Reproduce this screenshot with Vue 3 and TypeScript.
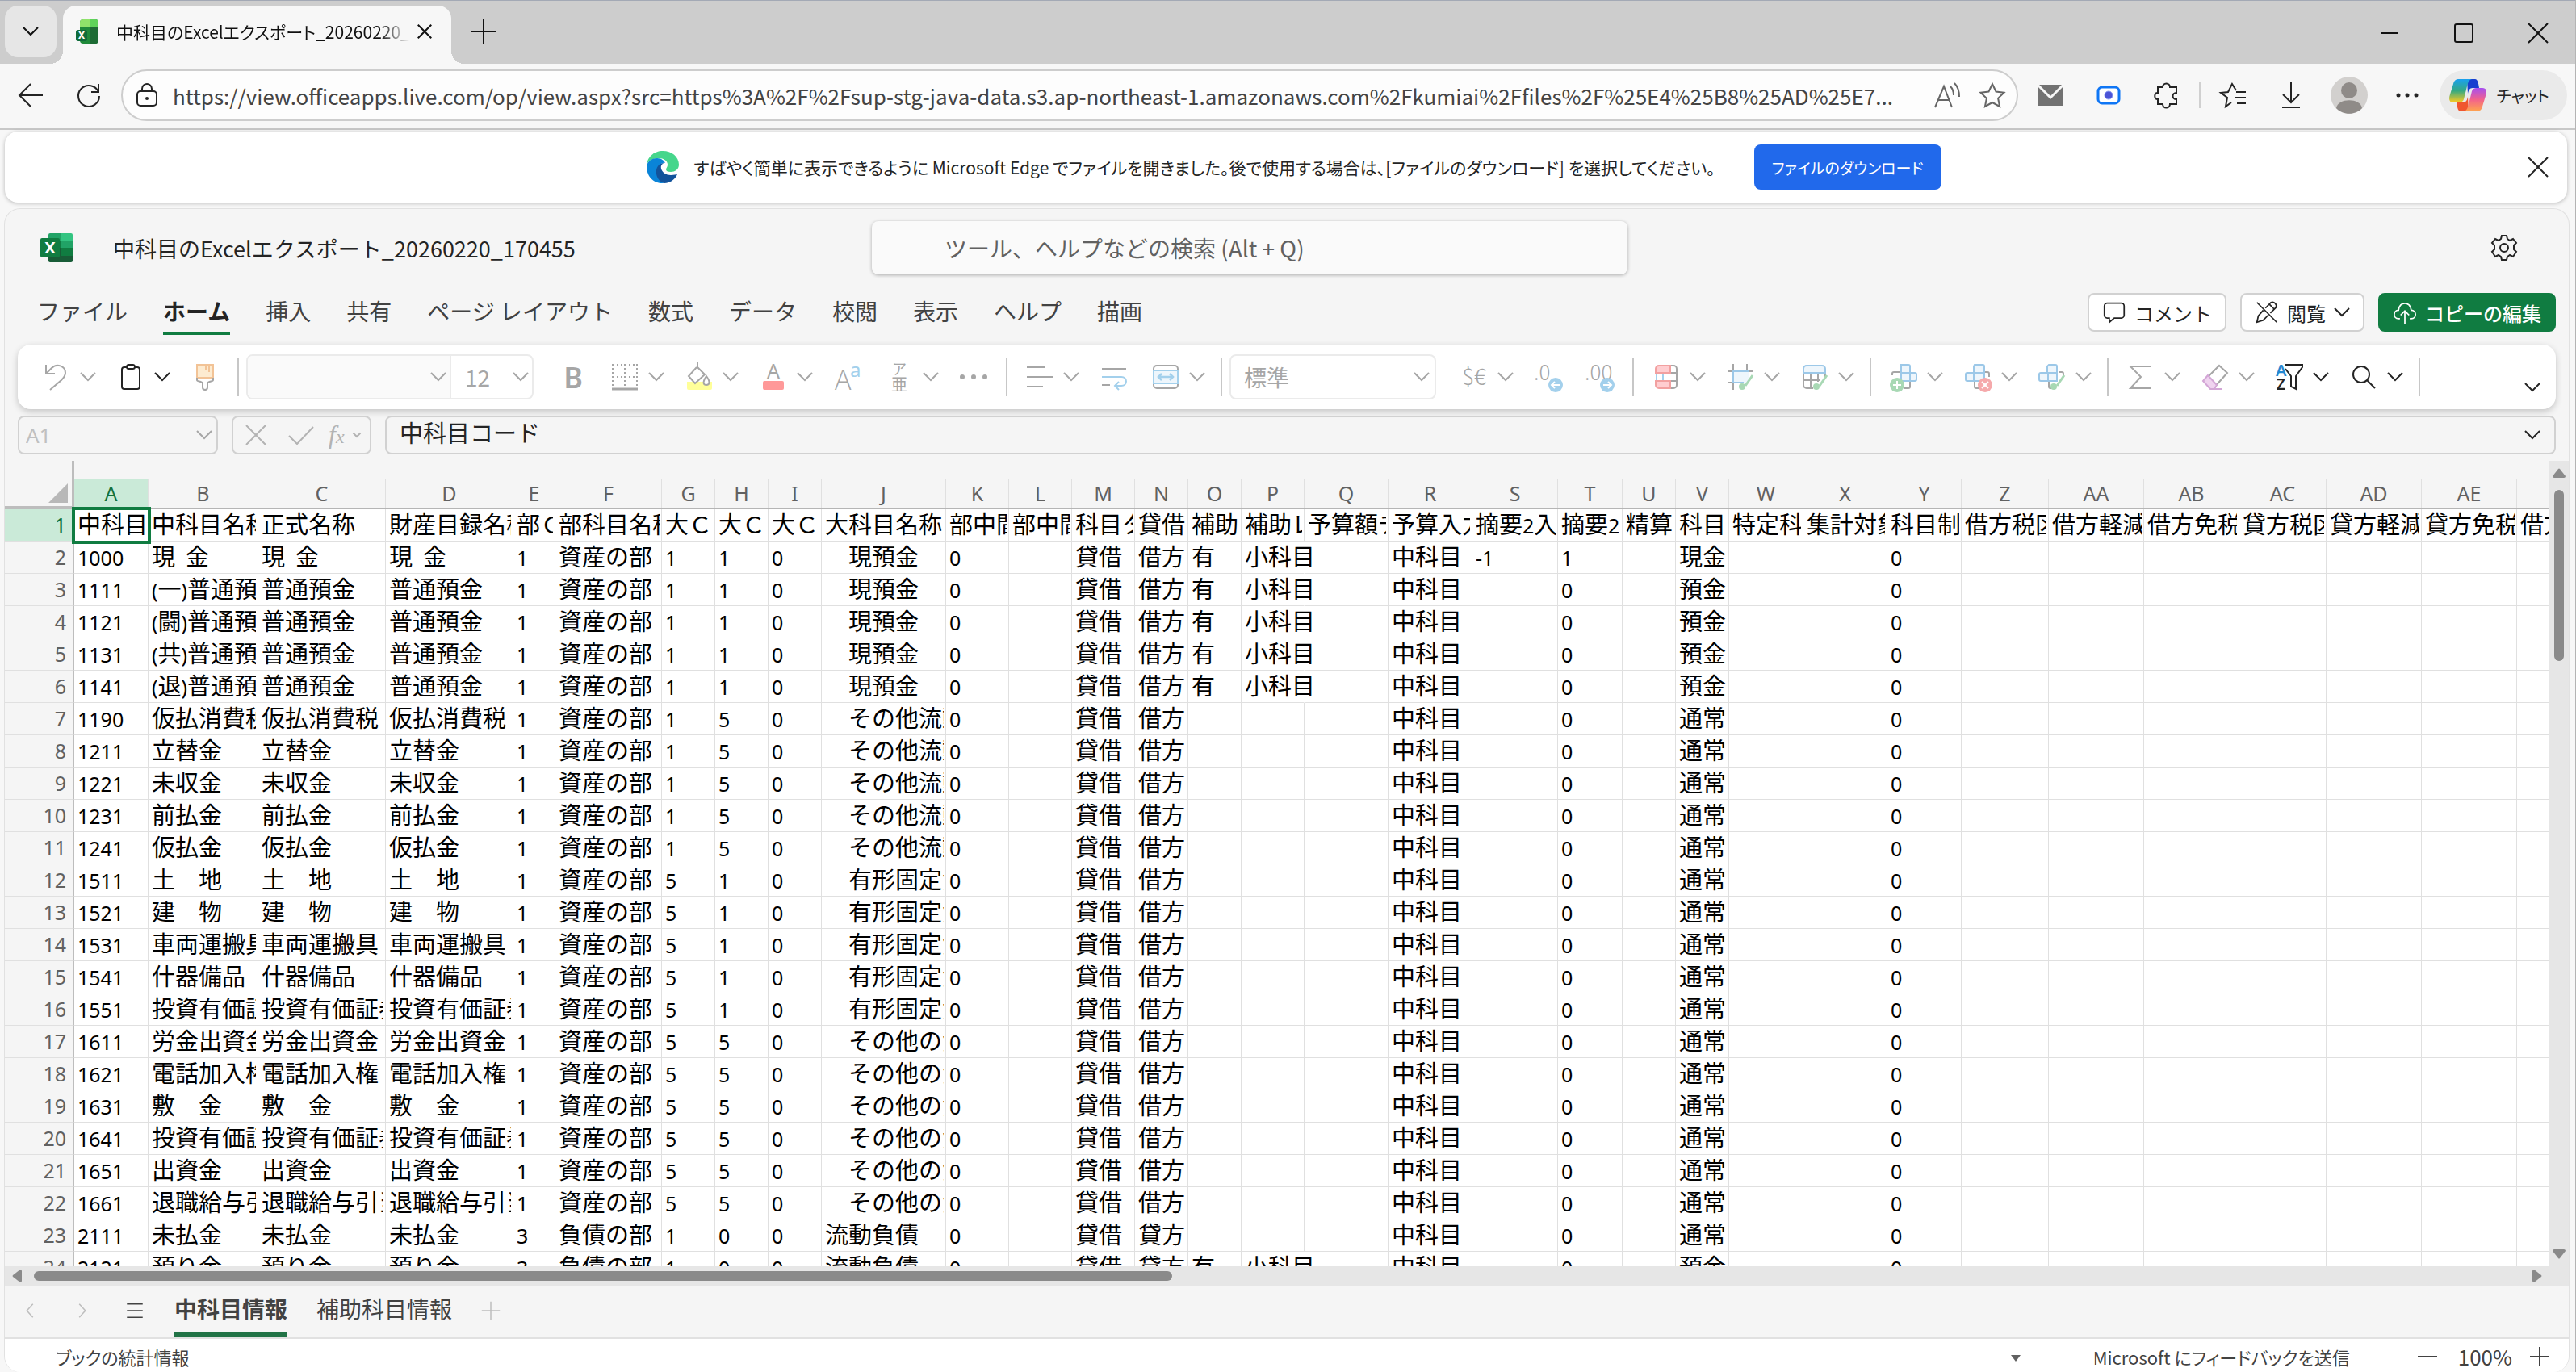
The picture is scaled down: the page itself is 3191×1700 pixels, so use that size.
<script setup lang="ts">
interface Tool {
  kind: 'plain' | 'split' | 'sep' | 'font' | 'format'
  icon?: string
  label?: string
  active?: boolean
}

// Glyphs on a 32 x 32 grid, stroked with the colour of the button they sit in.
const icons: Record<string, string> = {
  undo: '<path d="M3 1v11h11M3 12L10 5C16-1 27 2 27 11c0 4-2 6-5 9L8 32"/>',
  paste: '<path d="M11 4H8a3 3 0 0 0-3 3v21a3 3 0 0 0 3 3h16a3 3 0 0 0 3-3V7a3 3 0 0 0-3-3h-3"/><rect x="11" y="1" width="10" height="5" rx="2.5"/>',
  brush: '<path fill="#fdebd0" stroke="#f2c396" d="M6 1h20v16H6zM17 1v6M21 1v9"/><path d="M6 17v3c0 2 6 1 7 4v5a3 3 0 0 0 6 0v-5c1-3 7-2 7-4v-3"/>',
  border: '<path stroke-dasharray="2 3" d="M1 1h30M1 16h30M1 0v28M16 0v28M31 0v28"/><path stroke-width="3" d="M0 31h32"/>',
  fill: '<path fill="#ffff99" stroke="none" d="M1 22h31v8a2 2 0 0 1-2 2H3a2 2 0 0 1-2-2z"/><path fill="#fff" d="M13 4L3 15l8 9 12-11-9-9V-2M25 15c-6 9-3 11 0 11s6-3 0-11z"/>',
  fontColor: '<text x="16" y="18" font-size="25" text-anchor="middle" font-family="Noto Sans" fill="currentColor" stroke="none">A</text><rect x="3" y="21" width="26" height="11" rx="2" fill="#ff9999" stroke="none"/>',
  fontSize: '<text x="0" y="32" font-size="34" font-family="Open Sans" font-weight="300" fill="currentColor" stroke="none">A</text><text x="19" y="16" font-size="24" font-family="Noto Sans" fill="#a3d0ec" stroke="none">a</text>',
  phonetic: '<text x="16" y="13" font-size="18" text-anchor="middle" font-family="Noto Sans CJK JP" fill="currentColor" stroke="none">ア</text><text x="16" y="33" font-size="20" text-anchor="middle" font-family="Noto Sans CJK JP" fill="currentColor" stroke="none">亜</text>',
  more: '<g fill="currentColor" stroke="none"><circle cx="2" cy="16" r="3"/><circle cx="16" cy="16" r="3"/><circle cx="30" cy="16" r="3"/></g>',
  align: '<path d="M0 4h23M0 16h32M0 28h20"/>',
  wrap: '<path d="M1 6h30M1 26h10"/><path stroke="#a3d0ec" d="M1 16h24c8 0 8 11 0 11h-8M22 22l-5 5 5 5"/>',
  merge: '<rect x="1" y="2" width="30" height="28" rx="4"/><path fill="#eef6fc" stroke="#a3d0ec" d="M1 8h30v16H1z"/><path stroke="#a3d0ec" stroke-width="2.5" d="M7 16h18M11 12l-4 4 4 4M21 12l4 4-4 4"/>',
  currency: '<text x="16" y="26" font-size="28" text-anchor="middle" font-family="Noto Sans CJK JP" font-weight="300" fill="currentColor" stroke="none">$€</text>',
  decLess: '<text x="-2" y="20" font-size="26" font-family="Noto Sans CJK JP" font-weight="300" fill="currentColor" stroke="none">.0</text><circle cx="25" cy="26" r="9" fill="#a3d0ec" stroke="none"/><path stroke="#fff" d="M30 26H20M24 22l-4 4 4 4"/>',
  decMore: '<text x="-3" y="20" font-size="26" font-family="Noto Sans CJK JP" font-weight="300" fill="currentColor" stroke="none">.00</text><circle cx="25" cy="26" r="9" fill="#a3d0ec" stroke="none"/><path stroke="#fff" d="M20 26h10M26 22l4 4-4 4"/>',
  condition: '<path d="M20 2h5a4 4 0 0 1 4 4v20a4 4 0 0 1-4 4h-5M21 11h8M21 21h8"/><path fill="#ffcdd0" stroke="#f2a0a0" d="M21 2H7a4 4 0 0 0-4 4v5h18zM21 30H7a4 4 0 0 1-4-4v-5h18z"/><path stroke="#a3d0ec" d="M4 12v8M12 12v8"/>',
  formatTable: '<path fill="#eef6fc" stroke="none" d="M6 9h20v14H6z"/><path stroke="#9cc8e8" d="M7 9v14M0 9h32M6 23h14"/><path d="M7 0v8M24 0v8M7 24v8M0 9h6M26 9h6M0 23h6"/><path stroke="#a8d8b4" stroke-width="3" d="M31 14l-9 13"/><circle cx="18" cy="28" r="4" fill="#a8d8b4" stroke="none"/>',
  cellStyle: '<path d="M2 11v15a4 4 0 0 0 4 4h8M2 20h20M11 11v19M20 11v11M29 11v5"/><path fill="#eef6fc" stroke="#9cc8e8" d="M6 2h19a4 4 0 0 1 4 4v5H2V6a4 4 0 0 1 4-4z"/><path stroke="#a8d8b4" stroke-width="3" d="M31 14l-9 13"/><circle cx="18" cy="28" r="4" fill="#a8d8b4" stroke="none"/>',
  insert: '<path d="M2 14v-2a2 2 0 0 1 2-2h8M24 22v6a2 2 0 0 1-2 2h-5"/><path fill="#eef6fc" stroke="#9cc8e8" d="M13 1h9a2 2 0 0 1 2 2v8h6a2 2 0 0 1 2 2v6a2 2 0 0 1-2 2h-6H13V11z"/><path stroke="#9cc8e8" d="M13 11h11v10"/><circle cx="8" cy="26" r="9" fill="#a8d8b4" stroke="none"/><path stroke="#fff" d="M8 21v10M3 26h10"/>',
  remove: '<path d="M24 10h4a2 2 0 0 1 2 2v4M12 22v6a2 2 0 0 0 2 2h3"/><path fill="#eef6fc" stroke="#9cc8e8" d="M12 1h10a2 2 0 0 1 2 2v18H3a2 2 0 0 1-2-2v-6a2 2 0 0 1 2-2h8V3z"/><path stroke="#9cc8e8" d="M11 11v10M11 11h13"/><circle cx="25" cy="26" r="9" fill="#f5a9ab" stroke="none"/><path stroke="#fff" d="M21 22l8 8M29 22l-8 8"/>',
  format: '<path d="M24 10h4a2 2 0 0 1 2 2v2M12 22v6a2 2 0 0 0 2 2h2"/><path fill="#eef6fc" stroke="#9cc8e8" d="M12 1h8a2 2 0 0 1 2 2v18H2a2 2 0 0 1-2-2v-6a2 2 0 0 1 2-2h8V3z"/><path stroke="#9cc8e8" d="M11 11v10M11 11h11"/><path stroke="#a8d8b4" stroke-width="3" d="M31 14l-9 13"/><circle cx="18" cy="28" r="4" fill="#a8d8b4" stroke="none"/>',
  sum: '<path d="M29 3H3l13 13L3 30h26"/>',
  clear: '<path d="M7 16L21 2l10 9-17 19"/><path fill="#efd3ef" stroke="#d3a6d6" d="M7 14l-6 7 9 10h5l3-5zM14 31h10"/>',
  sort: '<text x="-1" y="15" font-size="20" font-family="Noto Sans" font-weight="600" fill="#2488d1" stroke="none">A</text><text x="0" y="32" font-size="19" font-family="Noto Sans" font-weight="600" fill="currentColor" stroke="none">Z</text><path d="M11 1h21v3l-8 11v16l-6-3V15l-7-9"/>',
  find: '<circle cx="13" cy="13" r="10"/><path d="M20 20l10 10"/>',
  back: '<path d="M31 16H2M16 2L2 16l14 14"/>',
  reload: '<path d="M28 12A13 13 0 1 0 29 17M28 2v10h-9"/>',
  lock: '<rect x="4" y="11" width="24" height="18" rx="4"/><path d="M10 11V8a6 6 0 0 1 12 0v3"/><circle cx="16" cy="20" r="2" fill="currentColor" stroke="none"/>',
  aloud: '<path d="M1 31L12 5l10 26M5 22h13M20 5c3 3 4 7 4 11M25 1c5 5 6 11 6 17"/>',
  star: '<path d="M16 2l4.500 9.500 10 1.300-7.400 7 2 10.200L16 25l-9.100 5 2-10.200-7.400-7 10-1.300z"/>',
  mail: '<path fill="#727272" stroke="none" d="M0 3h32v26H0z"/><path stroke="#f7f7f7" stroke-width="3" d="M0 3l16 16L32 3"/>',
  capture: '<rect x="3" y="6" width="26" height="20" rx="5" fill="#fff" stroke="#0f76f5" stroke-width="3"/><circle cx="16" cy="16" r="5" fill="#4b53d6" stroke="#8a9cf5" stroke-width="1"/>',
  puzzle: '<path d="M5 6h6a4.500 4.500 0 0 1 9 0h8v7c-6 0-6 8 0 8v6h-8a4.500 4.500 0 0 1-9 0H5v-6c-5 0-5-8 0-8z"/>',
  favs: '<path d="M14 25l-7 5 2-11-8-6 9-1 5-10 5 8M20 12h12M19 19h13M21 26h11"/>',
  download: '<path d="M16 0v25M6 15l10 10 10-10M5 31h22"/>',
  dots: '<g fill="currentColor" stroke="none"><circle cx="5" cy="16" r="2.500"/><circle cx="16" cy="16" r="2.500"/><circle cx="27" cy="16" r="2.500"/></g>',
  close: '<path d="M4 4l24 24M28 4L4 28"/>',
  plus: '<path d="M16 1v30M1 16h30"/>',
  minus: '<path d="M4 16h24"/>',
  maximize: '<rect x="5" y="5" width="22" height="22" rx="2"/>',
  check: '<path d="M1 17l10 10L31 6"/>',
  gear: '<circle cx="16" cy="16" r="5"/><path d="M13 1h6l1 4 3 2 4-2 4 5-3 3v5l3 3-4 6-4-2-3 2-1 4h-6l-1-4-3-2-4 2-4-6 3-3v-5l-3-3 4-5 4 2 3-2z"/>',
  comment: '<path d="M6 3h20a4 4 0 0 1 4 4v13a4 4 0 0 1-4 4H16l-7 6v-6H6a4 4 0 0 1-4-4V7a4 4 0 0 1 4-4z"/>',
  viewing: '<path d="M2 2l28 28M14 10l8-8c4-2 9 3 7 7l-8 8M11 13L4 21 2 30l9-3 7-7M20 5l7 7"/>',
  cloud: '<path d="M9 25H7C-1 25-1 13 7 13 8 0 24 0 25 13c8 0 8 12 0 12h-2M16 32V15M10 20l6-6 6 6"/>',
  menu: '<path d="M3 5h26M3 16h26M3 27h26"/>',
  prev: '<path d="M21 5L11 16l10 11"/>',
  next: '<path d="M11 5l10 11-10 11"/>',
}

const tools: Tool[] = [
  { kind: 'split', icon: 'undo', label: '元に戻す' },
  { kind: 'split', icon: 'paste', label: '貼り付け', active: true },
  { kind: 'plain', icon: 'brush', label: '書式のコピー' },
  { kind: 'sep' },
  { kind: 'font' },
  { kind: 'plain', icon: 'bold', label: '太字' },
  { kind: 'split', icon: 'border', label: '罫線' },
  { kind: 'split', icon: 'fill', label: '塗りつぶしの色' },
  { kind: 'split', icon: 'fontColor', label: 'フォントの色' },
  { kind: 'plain', icon: 'fontSize', label: 'フォント サイズの拡大' },
  { kind: 'split', icon: 'phonetic', label: 'ふりがな' },
  { kind: 'plain', icon: 'more', label: 'その他' },
  { kind: 'sep' },
  { kind: 'split', icon: 'align', label: '配置' },
  { kind: 'plain', icon: 'wrap', label: '折り返し' },
  { kind: 'split', icon: 'merge', label: '結合' },
  { kind: 'sep' },
  { kind: 'format' },
  { kind: 'split', icon: 'currency', label: '通貨' },
  { kind: 'plain', icon: 'decLess', label: '小数点以下を減らす' },
  { kind: 'plain', icon: 'decMore', label: '小数点以下を増やす' },
  { kind: 'sep' },
  { kind: 'split', icon: 'condition', label: '条件付き書式' },
  { kind: 'split', icon: 'formatTable', label: 'テーブルとして書式設定' },
  { kind: 'split', icon: 'cellStyle', label: 'セルのスタイル' },
  { kind: 'sep' },
  { kind: 'split', icon: 'insert', label: '挿入' },
  { kind: 'split', icon: 'remove', label: '削除' },
  { kind: 'split', icon: 'format', label: '書式' },
  { kind: 'sep' },
  { kind: 'split', icon: 'sum', label: 'オート SUM' },
  { kind: 'split', icon: 'clear', label: 'クリア' },
  { kind: 'split', icon: 'sort', label: '並べ替え', active: true },
  { kind: 'split', icon: 'find', label: '検索', active: true },
  { kind: 'sep' },
]

const menus = ['ファイル', 'ホーム', '挿入', '共有', 'ページ レイアウト', '数式', 'データ', '校閲', '表示', 'ヘルプ', '描画']

const columns: [string, number, string][] = [
  ['A', 92, '中科目コード'], ['B', 136, '中科目名称'], ['C', 158, '正式名称'], ['D', 158, '財産目録名称'],
  ['E', 52, '部Ｃ'], ['F', 132, '部科目名称'], ['G', 66, '大Ｃ'], ['H', 66, '大Ｃ'], ['I', 66, '大Ｃ'],
  ['J', 154, '大科目名称'], ['K', 78, '部中間'], ['L', 78, '部中間'], ['M', 78, '科目タイプ'], ['N', 66, '貸借'],
  ['O', 66, '補助'], ['P', 78, '補助レベル'], ['Q', 104, '予算額チェック'], ['R', 104, '予算入力'],
  ['S', 106, '摘要2入力'], ['T', 80, '摘要2'], ['U', 66, '精算'], ['V', 66, '科目'], ['W', 92, '特定科目'],
  ['X', 104, '集計対象'], ['Y', 92, '科目制御'], ['Z', 108, '借方税区分'], ['AA', 118, '借方軽減税'],
  ['AB', 118, '借方免税区'], ['AC', 108, '貸方税区分'], ['AD', 118, '貸方軽減税'], ['AE', 118, '貸方免税区'],
  ['', 118, '借方区分'],
]
const gridWidth = columns.reduce((sum, c) => sum + c[1], 86)

// code, short name, formal name, section, group, subgroup, group name, side, balance type, has sub accounts
type Account = [string, string, string, string, string, string, string, string, string, boolean]
const genkin = '　現預金'
const ryudo = '　その他流動資産'
const yukei = '　有形固定資産'
const sonota = '　その他の資産'
const accounts: Account[] = [
  ['1000', '現  金', '現  金', '1', '1', '1', genkin, '借方', '現金', true],
  ['1111', '(一)普通預金', '普通預金', '1', '1', '1', genkin, '借方', '預金', true],
  ['1121', '(闘)普通預金', '普通預金', '1', '1', '1', genkin, '借方', '預金', true],
  ['1131', '(共)普通預金', '普通預金', '1', '1', '1', genkin, '借方', '預金', true],
  ['1141', '(退)普通預金', '普通預金', '1', '1', '1', genkin, '借方', '預金', true],
  ['1190', '仮払消費税', '仮払消費税', '1', '1', '5', ryudo, '借方', '通常', false],
  ['1211', '立替金', '立替金', '1', '1', '5', ryudo, '借方', '通常', false],
  ['1221', '未収金', '未収金', '1', '1', '5', ryudo, '借方', '通常', false],
  ['1231', '前払金', '前払金', '1', '1', '5', ryudo, '借方', '通常', false],
  ['1241', '仮払金', '仮払金', '1', '1', '5', ryudo, '借方', '通常', false],
  ['1511', '土　地', '土　地', '1', '5', '1', yukei, '借方', '通常', false],
  ['1521', '建　物', '建　物', '1', '5', '1', yukei, '借方', '通常', false],
  ['1531', '車両運搬具', '車両運搬具', '1', '5', '1', yukei, '借方', '通常', false],
  ['1541', '什器備品', '什器備品', '1', '5', '1', yukei, '借方', '通常', false],
  ['1551', '投資有価証券', '投資有価証券', '1', '5', '1', yukei, '借方', '通常', false],
  ['1611', '労金出資金', '労金出資金', '1', '5', '5', sonota, '借方', '通常', false],
  ['1621', '電話加入権', '電話加入権', '1', '5', '5', sonota, '借方', '通常', false],
  ['1631', '敷　金', '敷　金', '1', '5', '5', sonota, '借方', '通常', false],
  ['1641', '投資有価証券', '投資有価証券', '1', '5', '5', sonota, '借方', '通常', false],
  ['1651', '出資金', '出資金', '1', '5', '5', sonota, '借方', '通常', false],
  ['1661', '退職給与引当', '退職給与引当', '1', '5', '5', sonota, '借方', '通常', false],
  ['2111', '未払金', '未払金', '3', '1', '0', '流動負債', '貸方', '通常', false],
  ['2121', '預り金', '預り金', '3', '1', '0', '流動負債', '貸方', '預金', true],
]

const rows: string[][] = [
  columns.map((c) => c[2]),
  ...accounts.map((a, i) => {
    const cells = [
      a[0], a[1], a[2], a[2], a[3], a[3] === '1' ? '資産の部' : '負債の部', a[4], a[5], '0', a[6], '0', '',
      '貸借', a[7], a[9] ? '有' : '', a[9] ? '小科目' : '', '', '中科目', i === 0 ? '-1' : '', i === 0 ? '1' : '0',
      '', a[8], '', '', '0',
    ]
    return [...cells, ...Array<string>(columns.length - cells.length).fill('')]
  }),
]

// Half-width runs are set in the Latin face, the rest in the Japanese one.
const runs = (text: string) => text.split(/([\x20-\x7e]+)/).filter(Boolean)
const isLatin = (run: string) => /^[\x20-\x7e]/.test(run)
const spills = (row: number, col: number) => row > 0 && col === 15 && rows[row][col] !== ''

const url =
  'https://view.officeapps.live.com/op/view.aspx?src=https%3A%2F%2Fsup-stg-java-data.s3.ap-northeast-1.amazonaws.com%2Fkumiai%2Ffiles%2F%25E4%25B8%25AD%25E7...'
</script>

<template>
  <div class="window">
    <header class="tabstrip">
      <button class="tab-menu" aria-label="タブ操作メニュー"><svg class="chev" viewBox="0 0 20 12"><path d="M1 1l9 9 9-9" /></svg></button>
      <div class="tab">
        <svg class="tab-logo" viewBox="0 0 28 30">
          <rect x="5" width="23" height="30" rx="4" fill="#1f8a3a" />
          <path d="M5 4a4 4 0 0 1 4-4h8v10H5z" fill="#8fe36a" />
          <path d="M17 0h7a4 4 0 0 1 4 4v6H17z" fill="#5fd35a" />
          <path d="M17 10h11v16a4 4 0 0 1-4 4h-7z" fill="#1d6b34" />
          <rect y="13" width="14" height="14" rx="3" fill="#0f6b3a" />
          <text x="7" y="24" font-size="12" font-weight="700" text-anchor="middle" font-family="Noto Sans" fill="#fff">X</text>
        </svg>
        <span class="tab-title">中科目のExcelエクスポート_20260220_170455</span>
        <button class="icon tab-close" aria-label="タブを閉じる"><svg viewBox="0 0 32 32" v-html="icons.close" /></button>
      </div>
      <button class="icon new-tab" aria-label="新しいタブ"><svg viewBox="0 0 32 32" v-html="icons.plus" /></button>
      <div class="window-buttons">
        <button class="icon" aria-label="最小化"><svg viewBox="0 0 32 32"><path d="M5 16h22" /></svg></button>
        <button class="icon" aria-label="最大化"><svg viewBox="0 0 32 32" v-html="icons.maximize" /></button>
        <button class="icon" aria-label="閉じる"><svg viewBox="0 0 32 32" v-html="icons.close" /></button>
      </div>
    </header>

    <div class="toolbar">
      <button class="icon back" aria-label="戻る"><svg viewBox="0 0 32 32" v-html="icons.back" /></button>
      <button class="icon reload" aria-label="更新"><svg viewBox="0 0 32 32" v-html="icons.reload" /></button>
      <div class="address">
        <svg class="glyph" viewBox="0 0 32 32" v-html="icons.lock" />
        <input class="url" aria-label="アドレス" :value="url" />
        <button class="icon soft" aria-label="音声で読み上げる"><svg viewBox="0 0 32 32" v-html="icons.aloud" /></button>
        <button class="icon soft" aria-label="お気に入りに追加"><svg viewBox="0 0 32 32" v-html="icons.star" /></button>
      </div>
      <div class="extensions">
        <button class="icon" aria-label="メール"><svg viewBox="0 0 32 32" v-html="icons.mail" /></button>
        <button class="icon" aria-label="キャプチャ"><svg viewBox="0 0 32 32" v-html="icons.capture" /></button>
        <button class="icon" aria-label="拡張機能"><svg viewBox="0 0 32 32" v-html="icons.puzzle" /></button>
      </div>
      <span class="bar-line"></span>
      <div class="extensions">
        <button class="icon" aria-label="お気に入り"><svg viewBox="0 0 32 32" v-html="icons.favs" /></button>
        <button class="icon" aria-label="ダウンロード"><svg viewBox="0 0 32 32" v-html="icons.download" /></button>
        <button class="icon avatar" aria-label="プロファイル">
          <svg viewBox="0 0 46 46"><circle cx="23" cy="23" r="23" fill="#d2d0ce" stroke="none" /><circle cx="23" cy="17" r="10" fill="#8f8b88" stroke="none" /><path d="M7 39c2-13 30-13 32 0-8 9-24 9-32 0z" fill="#8f8b88" stroke="none" /></svg>
        </button>
        <button class="icon" aria-label="設定など"><svg viewBox="0 0 32 32" v-html="icons.dots" /></button>
      </div>
      <button class="copilot">
        <svg viewBox="0 0 46 40">
          <defs>
            <linearGradient id="cp-a" x1="0" y1="0" x2="0" y2="1"><stop offset="0" stop-color="#1aa0ef" /><stop offset=".5" stop-color="#35a982" /><stop offset="1" stop-color="#ffcb1f" /></linearGradient>
            <linearGradient id="cp-b" x1="0" y1="0" x2="0" y2="1"><stop offset="0" stop-color="#a64df0" /><stop offset=".5" stop-color="#f2628c" /><stop offset="1" stop-color="#ffa64d" /></linearGradient>
          </defs>
          <path d="M22 0h10c3 0 4 4 5 11h-8c-4 0-5 3-6 7z" fill="#173fcf" />
          <path d="M24 40H14c-3 0-4-4-5-11h8c4 0 5-3 6-7z" fill="#f0562f" />
          <path d="M12 0h16c-4 1-5 5-6 9l-4 16c-1 3-3 4-6 4H5c-5 0-6-4-4-10l4-13c1-4 3-6 7-6z" fill="url(#cp-a)" />
          <path d="M34 40H18c4-1 5-5 6-9l4-16c1-3 3-4 6-4h7c5 0 6 4 4 10l-4 13c-1 4-3 6-7 6z" fill="url(#cp-b)" />
        </svg>
        <span>チャット</span>
      </button>
    </div>

    <section class="notice">
      <div class="notice-body">
        <svg class="edge" viewBox="0 0 40 40">
          <path d="M0 19C0 8 9 0 20 0s20 7 20 17c0 6-5 9-10 9-4 0-6-1-6-3s2-3 2-6c0-5-5-8-11-8C7 9 0 13 0 19z" fill="#46d68c" />
          <path d="M0 19C1 13 6 9 13 9c5 0 9 3 10 6-9-3-12 17 1 23-2 1-3 2-5 2C8 40 0 31 0 19z" fill="#0a84d8" />
          <path d="M22 15c-8 2-4 15 8 15 4 0 6-1 8-1-3 7-10 11-16 11-13-3-14-25 0-25z" fill="#12539b" />
        </svg>
        <p>すばやく簡単に表示できるように Microsoft Edge でファイルを開きました。後で使用する場合は、[ファイルのダウンロード] を選択してください。</p>
        <button class="primary">ファイルのダウンロード</button>
      </div>
      <button class="icon notice-close" aria-label="通知を閉じる"><svg viewBox="0 0 32 32" v-html="icons.close" /></button>
    </section>

    <main class="app">
      <div class="titlebar">
        <div class="doc">
          <svg class="logo" viewBox="0 0 40 36">
            <path d="M12 0h14v12H10V2a2 2 0 0 1 2-2z" fill="#21a366" /><path d="M25 0h13a2 2 0 0 1 2 2v8H25z" fill="#33c481" />
            <path d="M10 9h15v10H10z" fill="#107c41" /><path d="M25 9h15v10H25z" fill="#21a366" />
            <path d="M25 18h15v10H25z" fill="#107c41" /><path d="M10 18h15v10h15v6a2 2 0 0 1-2 2H12a2 2 0 0 1-2-2z" fill="#185c37" />
            <rect y="6" width="24" height="24" rx="2" fill="#107c41" />
            <text x="12" y="25" font-size="20" font-weight="700" text-anchor="middle" font-family="Noto Sans" fill="#fff">X</text>
          </svg>
          <h1>中科目のExcelエクスポート_20260220_170455</h1>
        </div>
        <input class="search" aria-label="検索" placeholder="ツール、ヘルプなどの検索 (Alt + Q)" />
        <button class="icon gear" aria-label="設定"><svg viewBox="0 0 32 32" v-html="icons.gear" /></button>
      </div>

      <div class="menubar">
        <nav>
          <button v-for="m in menus" :key="m" :class="{ current: m === 'ホーム' }">{{ m }}</button>
        </nav>
        <div class="actions">
          <button><svg class="glyph" viewBox="0 0 32 32" v-html="icons.comment" />コメント</button>
          <button><svg class="glyph" viewBox="0 0 32 32" v-html="icons.viewing" />閲覧<svg class="chev" viewBox="0 0 20 12"><path d="M1 1l9 9 9-9" /></svg></button>
          <button class="edit"><svg class="glyph" viewBox="0 0 32 32" v-html="icons.cloud" />コピーの編集</button>
        </div>
      </div>

      <div class="ribbon">
        <template v-for="(t, i) in tools" :key="i">
          <span v-if="t.kind === 'sep'" class="sep"></span>
          <div v-else-if="t.kind === 'font'" class="combo fonts">
            <label class="face"><select aria-label="フォント"><option></option></select><svg class="chev" viewBox="0 0 20 12"><path d="M1 1l9 9 9-9" /></svg></label>
            <label class="size"><select aria-label="フォント サイズ"><option>12</option></select><svg class="chev" viewBox="0 0 20 12"><path d="M1 1l9 9 9-9" /></svg></label>
          </div>
          <label v-else-if="t.kind === 'format'" class="combo number"><select aria-label="表示形式"><option>標準</option></select><svg class="chev" viewBox="0 0 20 12"><path d="M1 1l9 9 9-9" /></svg></label>
          <button v-else class="tool" :class="[t.kind, { active: t.active }]" :aria-label="t.label">
            <b v-if="t.icon === 'bold'">B</b>
            <svg v-else class="glyph" viewBox="0 0 32 32" v-html="icons[t.icon ?? '']" />
            <svg v-if="t.kind === 'split'" class="chev" viewBox="0 0 20 12"><path d="M1 1l9 9 9-9" /></svg>
          </button>
        </template>
        <button class="collapse" aria-label="リボンを折りたたむ"><svg class="chev" viewBox="0 0 20 12"><path d="M1 1l9 9 9-9" /></svg></button>
      </div>

      <div class="formula">
        <div class="field name"><input aria-label="名前ボックス" value="A1" /><svg class="chev" viewBox="0 0 20 12"><path d="M1 1l9 9 9-9" /></svg></div>
        <div class="field fx">
          <button aria-label="キャンセル"><svg class="glyph" viewBox="0 0 32 32" v-html="icons.close" /></button>
          <button aria-label="入力"><svg class="glyph" viewBox="0 0 32 32" v-html="icons.check" /></button>
          <button class="fn" aria-label="関数の挿入"><i>f<small>x</small></i><svg class="chev tiny" viewBox="0 0 20 12"><path d="M1 1l9 9 9-9" /></svg></button>
        </div>
        <div class="field bar"><input aria-label="数式バー" value="中科目コード" /><svg class="chev" viewBox="0 0 20 12"><path d="M1 1l9 9 9-9" /></svg></div>
      </div>

      <div class="sheet">
        <div class="viewport">
          <table :style="{ width: gridWidth + 'px' }">
            <colgroup>
              <col style="width: 86px" />
              <col v-for="(c, i) in columns" :key="i" :style="{ width: c[1] + 'px' }" />
            </colgroup>
            <thead>
              <tr>
                <th class="corner"><svg viewBox="0 0 24 24"><path d="M24 0v24H0z" /></svg></th>
                <th v-for="(c, i) in columns" :key="i" scope="col" :class="{ picked: i === 0 }"><div>{{ c[0] }}</div></th>
              </tr>
            </thead>
            <tbody>
              <tr v-for="(row, r) in rows" :key="r">
                <th scope="row" :class="{ picked: r === 0 }">{{ r + 1 }}</th>
                <td v-for="(cell, c) in row" :key="c" :class="{ spill: spills(r, c), cursor: r === 0 && c === 0 }">
                  <div><span v-for="(run, k) in runs(cell)" :key="k" :class="{ latin: isLatin(run) }">{{ run }}</span></div>
                </td>
              </tr>
            </tbody>
          </table>
        </div>
        <div class="vscroll">
          <svg viewBox="0 0 16 12"><path d="M7 1L0 10q0 2 2 2h12q2 0 2-2L9 1q-1-1-2 0z" /></svg>
          <span></span>
          <svg viewBox="0 0 16 12"><path d="M7 11L0 2q0-2 2-2h12q2 0 2 2L9 11q-1 1-2 0z" /></svg>
        </div>
      </div>
      <div class="hscroll">
        <svg viewBox="0 0 12 16"><path d="M1 7L10 0q2 0 2 2v12q0 2-2 2L1 9q-1-1 0-2z" /></svg>
        <span></span>
        <svg viewBox="0 0 12 16"><path d="M11 7L2 0Q0 0 0 2v12q0 2 2 2l9-7q1-1 0-2z" /></svg>
      </div>

      <div class="sheets">
        <button class="step" aria-label="前のシート"><svg class="glyph" viewBox="0 0 32 32" v-html="icons.prev" /></button>
        <button class="step" aria-label="次のシート"><svg class="glyph" viewBox="0 0 32 32" v-html="icons.next" /></button>
        <button class="all" aria-label="すべてのシート"><svg class="glyph" viewBox="0 0 32 32" v-html="icons.menu" /></button>
        <button class="sheet-tab current">中科目情報</button>
        <button class="sheet-tab">補助科目情報</button>
        <button class="step add" aria-label="新しいシート"><svg class="glyph" viewBox="0 0 32 32" v-html="icons.plus" /></button>
      </div>

      <footer class="status">
        <button>ブックの統計情報</button>
        <svg class="caret" viewBox="0 0 12 8"><path d="M0 0h12L6 8z" /></svg>
        <button class="feedback">Microsoft にフィードバックを送信</button>
        <button class="zoom" aria-label="縮小"><svg class="glyph" viewBox="0 0 32 32" v-html="icons.minus" /></button>
        <span class="level">100%</span>
        <button class="zoom" aria-label="拡大"><svg class="glyph" viewBox="0 0 32 32"><path d="M16 4v24M4 16h24" /></svg></button>
      </footer>
    </main>
  </div>
</template>

<style>
body {
  margin: 0;
  background: #f7f7f7;
}
</style>

<style scoped>
* {
  box-sizing: border-box;
}
.window {
  display: flex;
  flex-direction: column;
  height: 100vh;
  overflow: hidden;
  background: #f7f7f7;
  border-right: 1px solid #b4b4b4;
  font-family: 'Noto Sans CJK JP', 'Noto Sans', sans-serif;
  font-size: 28px;
  color: #242424;
}
button,
input,
select {
  font: inherit;
  color: inherit;
  margin: 0;
  padding: 0;
  border: 0;
  background: none;
  appearance: none;
  outline: none;
  min-width: 0;
}
button {
  display: flex;
  align-items: center;
  white-space: nowrap;
}
svg {
  display: block;
  flex: none;
  overflow: visible;
}
.icon {
  justify-content: center;
}
.icon svg,
.glyph,
.chev {
  width: 32px;
  height: 32px;
  fill: none;
  stroke: currentColor;
  stroke-width: 2;
}
.chev {
  width: 20px;
  height: 12px;
}

/* Browser chrome */
.tabstrip {
  display: flex;
  flex: none;
  height: 79px;
  padding: 6px 0 0 6px;
  background: #cdcdcd;
  border-top: 1px solid #a3a9b5;
  color: #111;
}
.tab-menu {
  justify-content: center;
  width: 64px;
  height: 64px;
  border-radius: 16px;
  background: #e6e6e6;
}
.tab {
  position: relative;
  display: flex;
  align-items: center;
  width: 481px;
  height: 72px;
  margin-left: 8px;
  padding: 0 22px 8px 16px;
  border-radius: 16px 16px 0 0;
  background: #f7f7f7;
}
.tab::before,
.tab::after {
  content: '';
  position: absolute;
  bottom: 0;
  left: -16px;
  width: 16px;
  height: 16px;
  background: radial-gradient(circle at 0 0, transparent 16px, #f7f7f7 16px);
}
.tab::after {
  left: auto;
  right: -16px;
  background: radial-gradient(circle at 100% 0, transparent 16px, #f7f7f7 16px);
}
.tab-logo {
  width: 28px;
  height: 30px;
}
.tab-title {
  flex: 1;
  margin: 0 8px 0 22px;
  overflow: hidden;
  white-space: nowrap;
  font-size: 21px;
  font-feature-settings: 'palt';
  mask-image: linear-gradient(to right, #000 90%, transparent);
}
.tab-close svg {
  width: 22px;
  height: 22px;
  stroke-width: 3;
}
.new-tab {
  height: 64px;
  margin-left: 24px;
}
.window-buttons {
  display: flex;
  gap: 60px;
  height: 68px;
  margin-left: auto;
  padding-right: 30px;
}
.toolbar {
  display: flex;
  flex: none;
  align-items: center;
  height: 82px;
  padding: 0 10px 2px 22px;
  border-bottom: 2px solid #c8c8c8;
}
.reload {
  margin: 0 24px 0 40px;
}
.address {
  display: flex;
  flex: 1;
  align-items: center;
  gap: 24px;
  height: 64px;
  padding: 0 14px 0 14px;
  border: 2px solid #cdcdcd;
  border-radius: 32px;
  background: #fdfdfd;
}
.url {
  flex: 1;
  height: 56px;
  margin: 0 -4px 0 -8px;
  font-size: 26px;
  color: #444;
}
.soft {
  color: #666;
}
.extensions {
  display: flex;
  align-items: center;
  gap: 40px;
  margin: 0 24px;
}
.bar-line {
  width: 2px;
  height: 32px;
  background: #d0d0d0;
}
.avatar {
  margin: 0 -7px;
}
.avatar svg {
  width: 46px;
  height: 46px;
}
.copilot {
  gap: 12px;
  height: 62px;
  padding: 0 22px 0 12px;
  border-radius: 31px;
  background: #eaeaea;
  font-size: 20px;
  font-feature-settings: 'palt';
}
.copilot svg {
  width: 46px;
  height: 40px;
}
.notice {
  display: flex;
  flex: none;
  align-items: center;
  height: 88px;
  margin: 2px 10px 7px 6px;
  padding-right: 20px;
  border-radius: 16px;
  background: #fff;
  box-shadow: 0 1px 5px rgba(0, 0, 0, 0.25);
}
.notice-body {
  display: flex;
  flex: 1;
  align-items: center;
  justify-content: center;
  padding-left: 72px;
  font-size: 21px;
  font-feature-settings: 'palt';
}
.notice-body p {
  margin: 0 48px 0 18px;
  white-space: nowrap;
}
.edge {
  width: 40px;
  height: 40px;
}
.primary {
  justify-content: center;
  width: 232px;
  height: 56px;
  border-radius: 8px;
  background: #2169eb;
  color: #fff;
  font-size: 19px;
  font-feature-settings: 'palt';
}

/* Workbook */
.app {
  display: flex;
  flex: 1;
  flex-direction: column;
  min-height: 0;
  margin: 0 7px 0 5px;
  overflow: hidden;
  border: 1px solid #e1e1e1;
  border-bottom: 0;
  border-radius: 20px;
  background: #f5f5f5;
}
.titlebar {
  display: flex;
  flex: none;
  align-items: center;
  height: 88px;
  padding: 8px 64px 0 44px;
}
.doc {
  display: flex;
  flex: 0 1 1030px;
  align-items: center;
  gap: 50px;
}
.logo {
  width: 40px;
  height: 36px;
}
h1 {
  margin: 0;
  font-size: 27px;
  font-weight: 400;
  white-space: nowrap;
}
.search {
  flex: 0 1 936px;
  height: 66px;
  padding: 0 90px;
  border-radius: 8px;
  background: #fafafa;
  box-shadow: 0 1px 4px rgba(0, 0, 0, 0.3);
}
.search::placeholder {
  color: #616161;
  opacity: 1;
}
.gear {
  margin-left: auto;
}
.menubar {
  display: flex;
  flex: none;
  justify-content: space-between;
  height: 80px;
  padding: 16px 16px 0 40px;
}
nav {
  display: flex;
  gap: 44px;
  align-items: flex-start;
}
nav button {
  height: 52px;
  padding-bottom: 4px;
  border-bottom: 4px solid transparent;
  color: #424242;
}
nav .current {
  border-color: #107c41;
  color: #242424;
  font-weight: 700;
}
.actions {
  display: flex;
  gap: 17px;
  align-items: flex-start;
}
.actions button {
  gap: 10px;
  height: 48px;
  padding: 0 16px;
  border: 2px solid #d1d1d1;
  border-radius: 8px;
  background: #fff;
  font-size: 24px;
}
.actions .glyph {
  width: 30px;
  height: 28px;
}
.actions .edit {
  border-color: #107c41;
  background: #107c41;
  color: #fff;
  font-weight: 500;
}
.ribbon {
  display: flex;
  flex: none;
  align-items: center;
  height: 80px;
  margin: 0 16px;
  padding: 0 19px 0 17px;
  border-radius: 16px;
  background: #fff;
  box-shadow: 0 3px 8px rgba(0, 0, 0, 0.2);
  color: #a6a6a6;
}
.tool {
  width: 64px;
  height: 64px;
  padding-left: 15px;
}
.tool.split {
  width: 92px;
  gap: 13px;
}
.tool b {
  width: 32px;
  text-align: center;
  font-family: 'Noto Sans', sans-serif;
  font-size: 36px;
  font-weight: 600;
}
.tool.active,
.collapse {
  color: #242424;
}
.sep {
  width: 2px;
  height: 48px;
  margin: 0 9px 0 7px;
  background: #c7c7c7;
}
.combo {
  display: flex;
  align-items: center;
  height: 56px;
  border: 2px solid #ebebeb;
  border-radius: 8px;
}
.combo select {
  flex: 1;
}
.fonts {
  width: 356px;
  margin-right: 18px;
}
.fonts label {
  display: flex;
  align-items: center;
  height: 52px;
}
.face {
  flex: 1;
  padding-right: 4px;
  border-right: 2px solid #ebebeb;
  border-radius: 6px 0 0 6px;
  background: #fafafa;
}
.size {
  width: 100px;
  padding: 0 4px 0 17px;
}
.number {
  width: 256px;
  margin-right: 16px;
  padding: 0 6px 0 16px;
}
.collapse {
  height: 24px;
  margin: 26px 0 0 auto;
}
.formula {
  display: flex;
  flex: none;
  gap: 17px;
  margin: 8px 16px;
}
.field {
  display: flex;
  align-items: center;
  height: 48px;
  border: 2px solid #d1d1d1;
  border-radius: 8px;
}
.field input {
  flex: 1;
  height: 40px;
}
.name {
  width: 248px;
  padding: 0 5px 0 8px;
  color: #a6a6a6;
}
.name input {
  font-family: 'Noto Sans', sans-serif;
  font-size: 26px;
  color: #c0c0c0;
}
.fx {
  gap: 24px;
  width: 173px;
  padding-left: 12px;
  color: #b3b3b3;
}
.fn {
  gap: 10px;
  margin-left: -6px;
}
.fn i {
  font-family: 'Liberation Serif', serif;
  font-size: 32px;
  line-height: 32px;
}
.fn small {
  font-size: 24px;
}
.tiny {
  width: 10px;
  height: 6px;
  stroke-width: 4;
}
.bar {
  flex: 1;
  padding: 0 17px 0 16px;
}
.bar input {
  margin-bottom: 8px;
  font-size: 29px;
}

/* Grid */
.sheet {
  display: flex;
  flex: 1;
  min-height: 0;
}
.viewport {
  flex: 1;
  min-width: 0;
  overflow: hidden;
  background: #fff;
}
table {
  table-layout: fixed;
  border-collapse: separate;
  border-spacing: 0;
}
th,
td {
  padding: 0;
  font-weight: 400;
}
thead th {
  height: 60px;
  background: #f5f5f5;
  border-bottom: 1px solid #b5b5b5;
  vertical-align: bottom;
}
thead th div {
  height: 37px;
  border-right: 1px solid #e0e0e0;
  line-height: 37px;
  text-align: center;
}
th {
  font-family: 'Noto Sans', sans-serif;
  font-size: 25px;
  color: #616161;
}
.corner {
  padding: 0 5px 4px 0;
  border-right: 3px solid #bdbdbd;
  border-bottom: 4px solid #bdbdbd;
}
.corner svg {
  width: 24px;
  height: 24px;
  margin-left: auto;
  fill: #b8b8b8;
}
tbody th {
  height: 40px;
  padding-right: 9px;
  border-right: 1px solid #bdbdbd;
  border-bottom: 1px solid #e0e0e0;
  background: #f5f5f5;
  line-height: 39px;
  text-align: right;
}
th.picked,
th.picked div {
  color: #0f703b;
}
tbody th.picked,
thead th.picked div {
  background: #caead8;
}
td {
  height: 40px;
  padding: 0 2px 0 4px;
  border-right: 1px solid #e0e0e0;
  border-bottom: 1px solid #e0e0e0;
  vertical-align: top;
  color: #000;
  font-size: 29px;
}
td div {
  height: 39px;
  overflow: hidden;
  white-space: pre;
  line-height: 35px;
}
.spill {
  border-right-color: transparent;
}
.spill div {
  overflow: visible;
}
.latin {
  font-family: 'Noto Sans', sans-serif;
  font-size: 25px;
}
.cursor {
  outline: 4px solid #107c41;
  outline-offset: -1px;
}
.vscroll,
.hscroll {
  display: flex;
  flex: none;
  align-items: center;
  background: #e6e6e6;
  fill: #8a8a8a;
}
.vscroll {
  flex-direction: column;
  width: 24px;
  padding: 9px 0;
}
.vscroll svg {
  width: 16px;
  height: 12px;
}
.vscroll span {
  width: 12px;
  height: 212px;
  margin: 15px 0 auto;
  border-radius: 6px;
  background: #8a8a8a;
}
.hscroll {
  height: 24px;
  padding: 0 33px 0 9px;
}
.hscroll svg {
  width: 12px;
  height: 16px;
}
.hscroll span {
  width: 45%;
  height: 12px;
  margin: 0 auto 0 15px;
  border-radius: 6px;
  background: #8a8a8a;
}
.sheets {
  display: flex;
  flex: none;
  align-items: center;
  height: 66px;
  padding: 0 16px 0 15px;
  border-bottom: 2px solid #e1e1e1;
  color: #424242;
}
.step {
  width: 32px;
  margin-right: 33px;
  color: #bdbdbd;
}
.step .glyph,
.all .glyph {
  height: 24px;
}
.sheets .glyph {
  margin-bottom: 2px;
}
.all {
  margin-right: 33px;
}
.sheet-tab {
  height: 64px;
  margin-right: 36px;
  padding-bottom: 6px;
  border-top: 4px solid transparent;
  border-bottom: 6px solid transparent;
}
.sheet-tab.current {
  border-bottom-color: #217346;
  font-weight: 700;
}
.add .glyph {
  width: 24px;
}
.status {
  display: flex;
  flex: none;
  align-items: center;
  height: 41px;
  padding: 2px 20px 0 63px;
  background: #fff;
  color: #424242;
  font-size: 22px;
  font-feature-settings: 'palt';
}
.status button {
  height: 34px;
  font-feature-settings: 'palt';
}
.caret {
  width: 12px;
  height: 8px;
  margin: 4px 90px 0 auto;
  fill: #616161;
}
.feedback {
  margin-right: 80px;
}
.level {
  margin: 0 18px 0 22px;
  font-size: 26px;
}
</style>
